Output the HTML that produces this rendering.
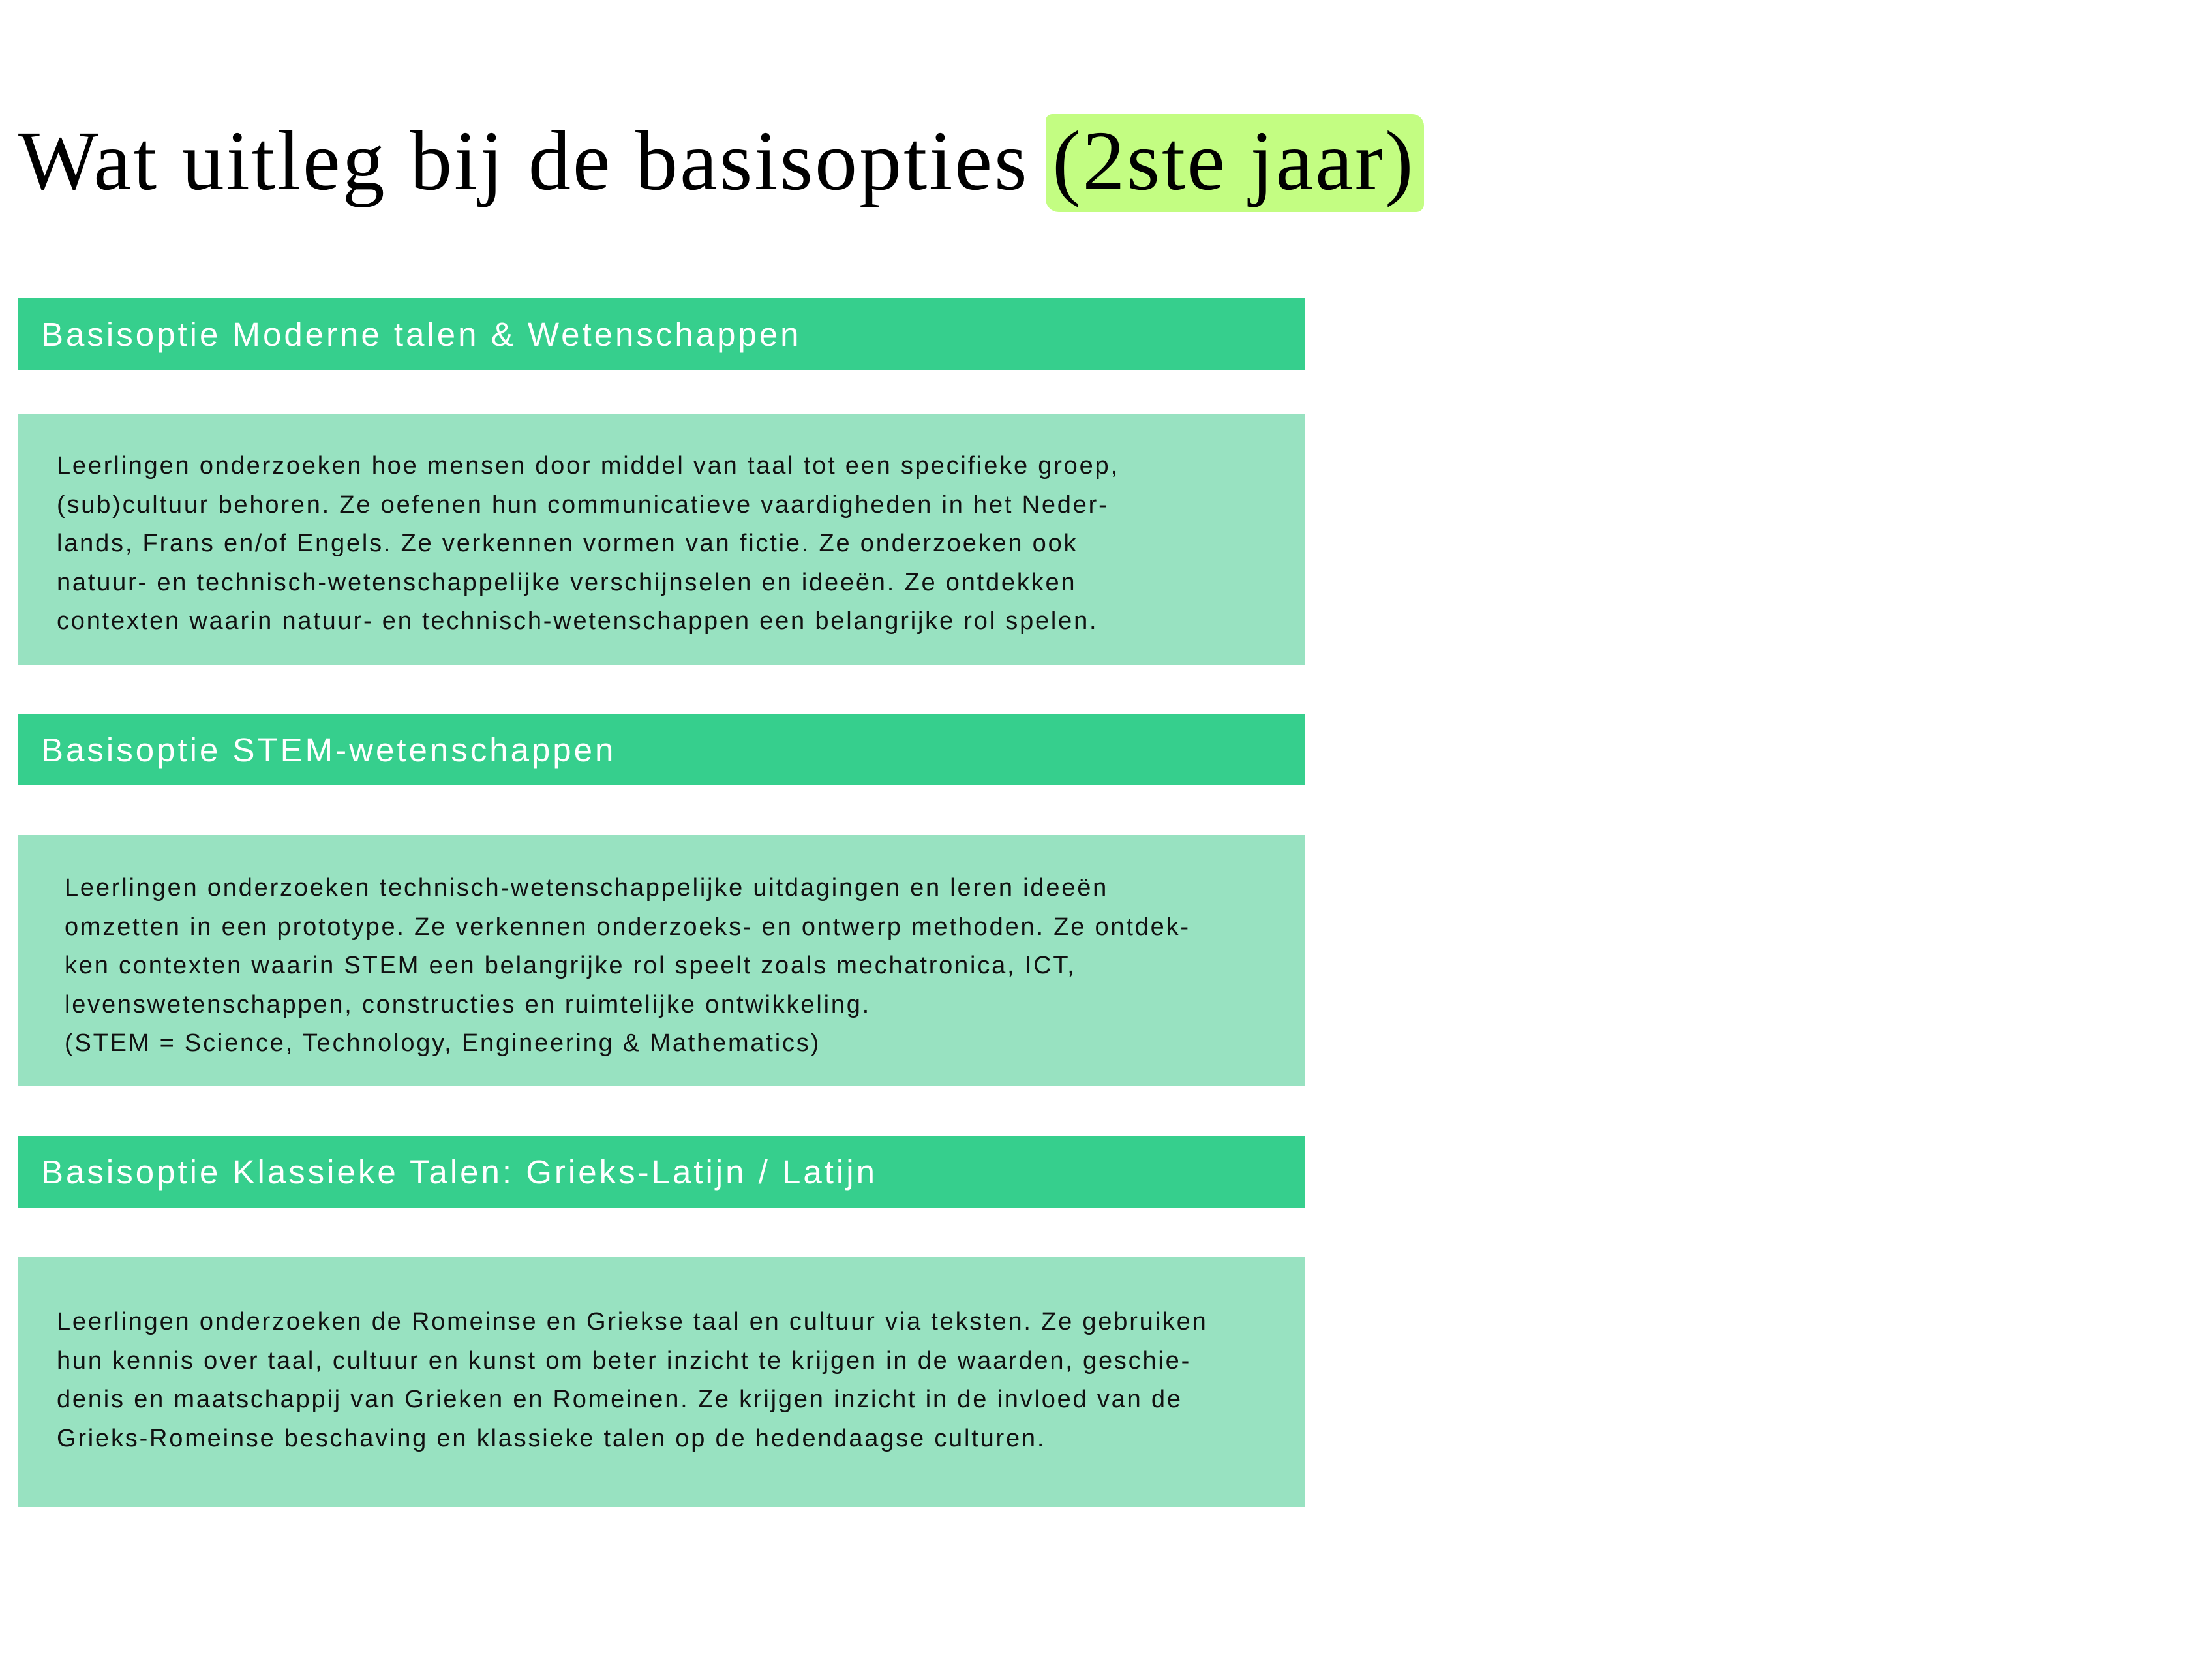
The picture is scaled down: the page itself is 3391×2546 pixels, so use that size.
<!DOCTYPE html>
<html><head><meta charset="utf-8"><style>
*{margin:0;padding:0;box-sizing:border-box}
body{width:3391px;height:2546px;background:#fff;position:relative;overflow:hidden;font-family:"Liberation Sans",sans-serif}
.title{position:absolute;left:28px;top:172px;font-family:"Liberation Serif",serif;font-size:130px;line-height:150px;letter-spacing:3px;color:#000;white-space:nowrap}
.hl{background:#c3fd82;border-radius:10px 18px 12px 20px;padding:0 14px 6px 0;margin-left:-10px;padding-left:10px}
.bar{position:absolute;left:27px;width:1973px;background:#36cf8d;color:#fff;font-size:51px;letter-spacing:4px;padding-left:36px;display:flex;align-items:center;white-space:nowrap}
.box{position:absolute;left:27px;width:1973px;background:#98e2c1}
.box p{position:absolute;font-size:38px;letter-spacing:2.8px;line-height:59.5px;color:#111;white-space:nowrap}
</style></head><body>
<div class="title">Wat uitleg bij de basisopties <span class="hl">(2ste jaar)</span></div>

<div class="bar" style="top:457px;height:110px">Basisoptie Moderne talen &amp; Wetenschappen</div>
<div class="box" style="top:635px;height:385px"><p style="left:60px;top:50px">Leerlingen onderzoeken hoe mensen door middel van taal tot een specifieke groep,<br>(sub)cultuur behoren. Ze oefenen hun communicatieve vaardigheden in het Neder-<br>lands, Frans en/of Engels. Ze verkennen vormen van fictie. Ze onderzoeken ook<br>natuur- en technisch-wetenschappelijke verschijnselen en ideeën. Ze ontdekken<br>contexten waarin natuur- en technisch-wetenschappen een belangrijke rol spelen.</p></div>

<div class="bar" style="top:1094px;height:110px">Basisoptie STEM-wetenschappen</div>
<div class="box" style="top:1280px;height:385px"><p style="left:72px;top:52px">Leerlingen onderzoeken technisch-wetenschappelijke uitdagingen en leren ideeën<br>omzetten in een prototype. Ze verkennen onderzoeks- en ontwerp methoden. Ze ontdek-<br>ken contexten waarin STEM een belangrijke rol speelt zoals mechatronica, ICT,<br>levenswetenschappen, constructies en ruimtelijke ontwikkeling.<br>(STEM = Science, Technology, Engineering &amp; Mathematics)</p></div>

<div class="bar" style="top:1741px;height:110px">Basisoptie Klassieke Talen: Grieks-Latijn / Latijn</div>
<div class="box" style="top:1927px;height:383px"><p style="left:60px;top:70px">Leerlingen onderzoeken de Romeinse en Griekse taal en cultuur via teksten. Ze gebruiken<br>hun kennis over taal, cultuur en kunst om beter inzicht te krijgen in de waarden, geschie-<br>denis en maatschappij van Grieken en Romeinen. Ze krijgen inzicht in de invloed van de<br>Grieks-Romeinse beschaving en klassieke talen op de hedendaagse culturen.</p></div>
</body></html>
